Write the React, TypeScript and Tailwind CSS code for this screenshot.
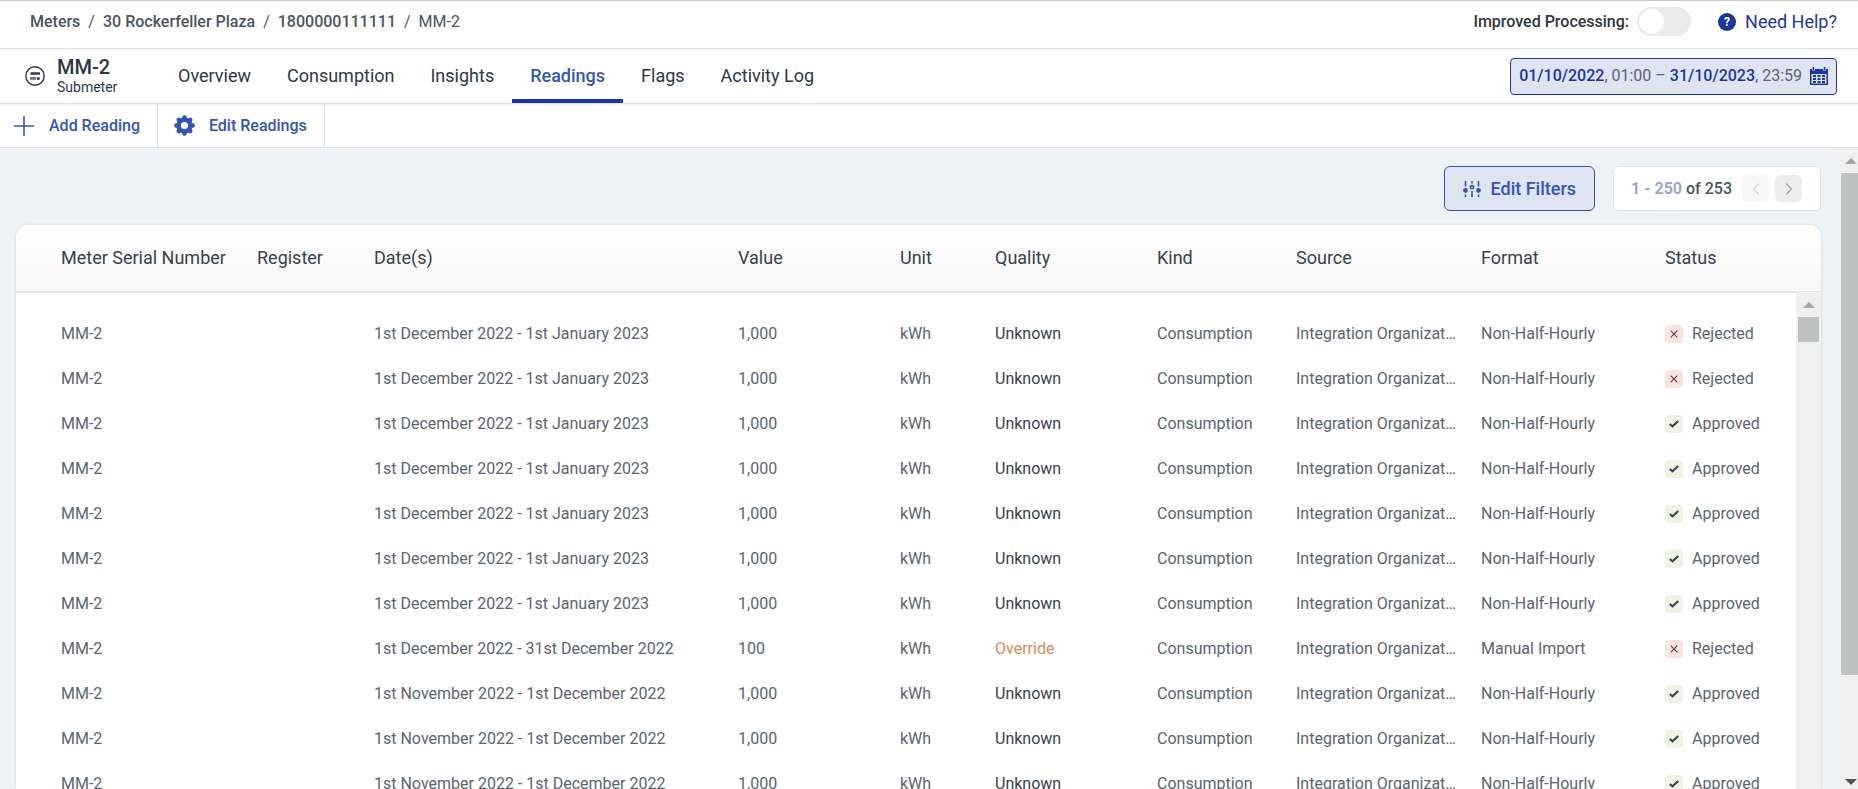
import React, { useState } from 'react';
import { ChevronLeft, ChevronRight } from 'lucide-react';

type Reading = {
  dates: string;
  value: string;
  quality: 'Unknown' | 'Override';
  format: string;
  status: 'Approved' | 'Rejected';
};

const december = '1st December 2022 - 1st January 2023';
const november = '1st November 2022 - 1st December 2022';

const readings: Reading[] = [
  { dates: december, value: '1,000', quality: 'Unknown', format: 'Non-Half-Hourly', status: 'Rejected' },
  { dates: december, value: '1,000', quality: 'Unknown', format: 'Non-Half-Hourly', status: 'Rejected' },
  { dates: december, value: '1,000', quality: 'Unknown', format: 'Non-Half-Hourly', status: 'Approved' },
  { dates: december, value: '1,000', quality: 'Unknown', format: 'Non-Half-Hourly', status: 'Approved' },
  { dates: december, value: '1,000', quality: 'Unknown', format: 'Non-Half-Hourly', status: 'Approved' },
  { dates: december, value: '1,000', quality: 'Unknown', format: 'Non-Half-Hourly', status: 'Approved' },
  { dates: december, value: '1,000', quality: 'Unknown', format: 'Non-Half-Hourly', status: 'Approved' },
  { dates: '1st December 2022 - 31st December 2022', value: '100', quality: 'Override', format: 'Manual Import', status: 'Rejected' },
  { dates: november, value: '1,000', quality: 'Unknown', format: 'Non-Half-Hourly', status: 'Approved' },
  { dates: november, value: '1,000', quality: 'Unknown', format: 'Non-Half-Hourly', status: 'Approved' },
  { dates: november, value: '1,000', quality: 'Unknown', format: 'Non-Half-Hourly', status: 'Approved' },
];

const columns = [
  { label: 'Meter Serial Number', width: 'w-[241px]' },
  { label: 'Register', width: 'w-[117px]' },
  { label: 'Date(s)', width: 'w-[364px]' },
  { label: 'Value', width: 'w-[162px]' },
  { label: 'Unit', width: 'w-[95px]' },
  { label: 'Quality', width: 'w-[162px]' },
  { label: 'Kind', width: 'w-[139px]' },
  { label: 'Source', width: 'w-[185px]' },
  { label: 'Format', width: 'w-[184px]' },
  { label: 'Status', width: 'w-[156px]' },
];

const tabs = ['Overview', 'Consumption', 'Insights', 'Readings', 'Flags', 'Activity Log'];

const MeterIcon = () => (
  <svg className="w-5 h-5" viewBox="0 0 20 20" fill="none">
    <circle cx="10" cy="10" r="9.2" stroke="#2d3748" strokeWidth="1.4" />
    <rect x="5.5" y="6.2" width="9.5" height="2.6" rx="0.6" fill="#2d3748" />
    <rect x="5" y="11" width="6" height="2.8" fill="#6b7280" />
    <circle cx="13.3" cy="12.4" r="1.5" fill="#2d3748" />
  </svg>
);

const gearTeeth = [0, 45, 90, 135, 180, 225, 270, 315];

const GearIcon = () => (
  <svg className="w-[21px] h-[21px]" viewBox="0 0 21 21" fill="#3555b5">
    {gearTeeth.map((angle) => (
      <path key={angle} d="M7.7 4L8.6 1.2Q8.8 0.2 10.5 0.2T12.4 1.2L13.3 4Z" transform={`rotate(${angle} 10.5 10.5)`} />
    ))}
    <circle cx="10.5" cy="10.5" r="5.8" fill="none" stroke="#3555b5" strokeWidth="4.4" />
  </svg>
);

const SlidersIcon = () => (
  <svg className="w-[18px] h-[18px]" viewBox="0 0 18 18" fill="#3555b5" stroke="#3555b5" strokeWidth="1.6">
    <path d="M2.5 1V6.5M2.5 14.5V17M9 1V3.5M9 11V17M15.5 1V6.5M15.5 14.5V17" />
    <circle cx="2.5" cy="10.5" r="1.6" />
    <circle cx="9" cy="7.2" r="1.6" fill="none" />
    <circle cx="15.5" cy="10.5" r="1.6" />
  </svg>
);

const CalendarIcon = () => (
  <svg className="w-[18px] h-[18px]" viewBox="0 0 18 18" fill="#1c36a0">
    <path d="M0 2h2v1.5h3V2h8v1.5h3V2h2v4H0z" />
    <path d="M2.6 0h1.6v3H2.6zM13.8 0h1.6v3h-1.6z" />
    <path fillRule="evenodd" d="M0 6h18v12H0zM1.5 7v9.5h15V7z" />
    <path d="M3 8h3v2H3zM7.5 8h3v2h-3zM12 8h3v2h-3zM3 11h3v2H3zM7.5 11h3v2h-3zM12 11h3v2h-3zM3 14h3v2H3zM7.5 14h3v2h-3zM12 14h3v2h-3z" />
  </svg>
);

const StatusBadge = ({ status }: { status: Reading['status'] }) => (
  <span className="flex items-center gap-[9px]">
    {status === 'Approved' ? (
      <span className="w-[18px] h-[18px] rounded bg-[#eef3e2] flex items-center justify-center">
        <svg className="w-[10px] h-2" viewBox="0 0 10 8" fill="none" stroke="#3b4451" strokeWidth="2.2">
          <path d="M0.8 4L3.5 6.3L9.3 1" />
        </svg>
      </span>
    ) : (
      <span className="w-[18px] h-[18px] rounded bg-[#fbe3df] flex items-center justify-center">
        <svg className="w-2 h-2" viewBox="0 0 8 8" fill="none" stroke="#6b3c3c" strokeWidth="1.1">
          <path d="M0.7 0.7L7.3 7.3M7.3 0.7L0.7 7.3" />
        </svg>
      </span>
    )}
    {status}
  </span>
);

const Arrow = ({ down = false, color }: { down?: boolean; color: string }) => (
  <svg className="w-3 h-[6px]" viewBox="0 0 12 6" fill={color}>
    <path d={down ? 'M0 0H12L6 6Z' : 'M0 6H12L6 0Z'} />
  </svg>
);

const App: React.FC = () => {
  const [activeTab, setActiveTab] = useState('Readings');
  const [improved, setImproved] = useState(false);

  return (
    <div className="h-screen flex flex-col overflow-hidden bg-white font-['Roboto',sans-serif] text-base text-[#2d3748]">
      <div className="h-[49px] shrink-0 border-t border-t-[#c8c8c8] border-b border-b-[#dfe3e8] flex items-center justify-between pl-[30px] pr-[21px] pb-[6px]">
        <nav aria-label="Breadcrumb" className="flex gap-2 font-medium text-[#4a5560]">
          <a href="#meters">Meters</a>
          <span className="font-normal">/</span>
          <a href="#plaza">30 Rockerfeller Plaza</a>
          <span className="font-normal">/</span>
          <a href="#meter">1800000111111</a>
          <span className="font-normal">/</span>
          <span className="font-normal">MM-2</span>
        </nav>
        <div className="flex items-center">
          <label className="flex items-center gap-2 font-medium text-[#2f3640]">
            Improved Processing:
            <input
              type="checkbox"
              role="switch"
              checked={improved}
              onChange={(e) => setImproved(e.target.checked)}
              className="appearance-none w-[54px] h-[29px] rounded-full bg-[#e9ebeb] p-[2px] before:block before:w-[25px] before:h-[25px] before:rounded-full before:bg-white checked:bg-[#3555b5] checked:before:ml-auto"
            />
          </label>
          <a href="#help" className="ml-[27px] flex items-center gap-[9px] text-lg text-[#1c36a0]">
            <span className="w-[18px] h-[18px] rounded-full bg-[#1c36a0] text-white text-xs font-bold flex items-center justify-center">?</span>
            Need Help?
          </a>
        </div>
      </div>

      <header className="relative h-[55px] shrink-0 border-b border-[#dfe1e4] shadow-[0_1px_2px_rgba(0,0,0,0.08)] flex items-center pl-[25px] pr-[21px]">
        <MeterIcon />
        <div className="ml-3 w-[103px]">
          <h1 className="text-xl leading-[22px] font-medium">MM-2</h1>
          <p className="text-sm leading-[18px]">Submeter</p>
        </div>
        <div role="tablist" className="self-stretch flex">
          {tabs.map((tab) => (
            <button
              key={tab}
              role="tab"
              aria-selected={tab === activeTab}
              onClick={() => setActiveTab(tab)}
              className={`px-[18px] text-lg border-y-4 border-t-transparent ${
                tab === activeTab ? 'font-medium text-[#3555b5] border-b-[#1c36a0]' : 'border-b-transparent'
              }`}
            >
              {tab}
            </button>
          ))}
        </div>
        <button className="ml-auto h-[37px] px-2 rounded border border-[#1c36a0] bg-[#dfe4f1] flex items-center gap-2 text-[#5d656e]">
          <span className="whitespace-pre">
            <span className="font-medium text-[#1c36a0]">01/10/2022</span>, 01:00 – <span className="font-medium text-[#1c36a0]">31/10/2023</span>, 23:59
          </span>
          <CalendarIcon />
        </button>
      </header>

      <div className="h-11 shrink-0 border-b border-[#dfe3e8] flex font-medium text-[#3555b5]">
        <button className="pl-[14px] pr-[17px] border-r border-[#dfe3e8] flex items-center gap-[15px]">
          <svg className="w-5 h-5" viewBox="0 0 20 20" stroke="#3555b5" strokeWidth="1.6">
            <path d="M10 0V20M0 10H20" />
          </svg>
          Add Reading
        </button>
        <button className="pl-4 pr-[17px] border-r border-[#dfe3e8] flex items-center gap-[14px]">
          <GearIcon />
          Edit Readings
        </button>
      </div>

      <div className="flex-1 min-h-0 flex bg-[#edf2f6]">
        <main className="flex-1 min-w-0 pl-4 pr-[18px] pt-[18px] flex flex-col">
          <div className="flex justify-end gap-[18px] mb-[14px]">
            <button className="h-[45px] px-[18px] rounded-md border border-[#3555b5] bg-[#dfe4f1] flex items-center gap-[9px] text-lg font-medium text-[#3555b5]">
              <SlidersIcon />
              Edit Filters
            </button>
            <div className="h-[45px] pl-[17px] pr-[18px] rounded-md border border-[#dfe3e8] bg-white flex items-center font-medium text-[#4a5560]">
              <span><span className="font-bold text-[#9aa5cc]">1 - 250</span> of 253</span>
              <button aria-label="Previous page" disabled className="ml-[10px] w-[27px] h-[27px] rounded-md bg-[#f7f7f7] flex items-center justify-center text-[#d5d8da]">
                <ChevronLeft size={20} strokeWidth={1.5} />
              </button>
              <button aria-label="Next page" className="ml-[6px] w-[27px] h-[27px] rounded-md bg-[#eceeee] flex items-center justify-center text-[#a3a7aa]">
                <ChevronRight size={20} strokeWidth={1.5} />
              </button>
            </div>
          </div>

          <section className="relative flex-1 min-h-0 overflow-hidden rounded-t-xl bg-white shadow-[0_0_3px_rgba(0,0,0,0.15)]">
            <table className="w-full table-fixed text-left">
              <thead>
                <tr className="h-[67px] border-b-2 border-[#dfe3e8] bg-linear-to-b from-white to-[#f7f7f7] text-lg text-[#37424e]">
                  {columns.map((column) => (
                    <th key={column.label} className={`${column.width} first:pl-[45px] font-normal whitespace-nowrap`}>
                      {column.label}
                    </th>
                  ))}
                </tr>
              </thead>
              <tbody className="text-[#5a6570] before:block before:h-[18px]">
                {readings.map((reading, index) => (
                  <tr key={index} className="h-[45px] whitespace-nowrap">
                    <td className="pl-[45px]">MM-2</td>
                    <td></td>
                    <td>{reading.dates}</td>
                    <td>{reading.value}</td>
                    <td>kWh</td>
                    <td className={reading.quality === 'Override' ? 'text-[#dd8a5c]' : 'text-[#37424e]'}>{reading.quality}</td>
                    <td>Consumption</td>
                    <td className="pr-[22px] truncate">Integration Organization</td>
                    <td>{reading.format}</td>
                    <td><StatusBadge status={reading.status} /></td>
                  </tr>
                ))}
              </tbody>
            </table>
            <div className="absolute right-0 top-[67px] bottom-0 w-[25px] bg-[#f0f0f0] flex flex-col items-center pt-[10px]">
              <Arrow color="#a3a3a8" />
              <div className="mt-[9px] w-[21px] h-[25px] bg-[#c0c1c1]" />
            </div>
          </section>
        </main>

        <div className="w-[19px] shrink-0 bg-[#f0f0f0] flex flex-col items-end pt-[10px] pb-1">
          <div className="pr-[1px]"><Arrow color="#a3a3a8" /></div>
          <div className="mt-[9px] w-[17px] flex-[502] bg-[#c0c1c1]" />
          <div className="flex-[104]" />
          <div className="pr-[1px]"><Arrow down color="#4d525a" /></div>
        </div>
      </div>
    </div>
  );
};

export default App;
